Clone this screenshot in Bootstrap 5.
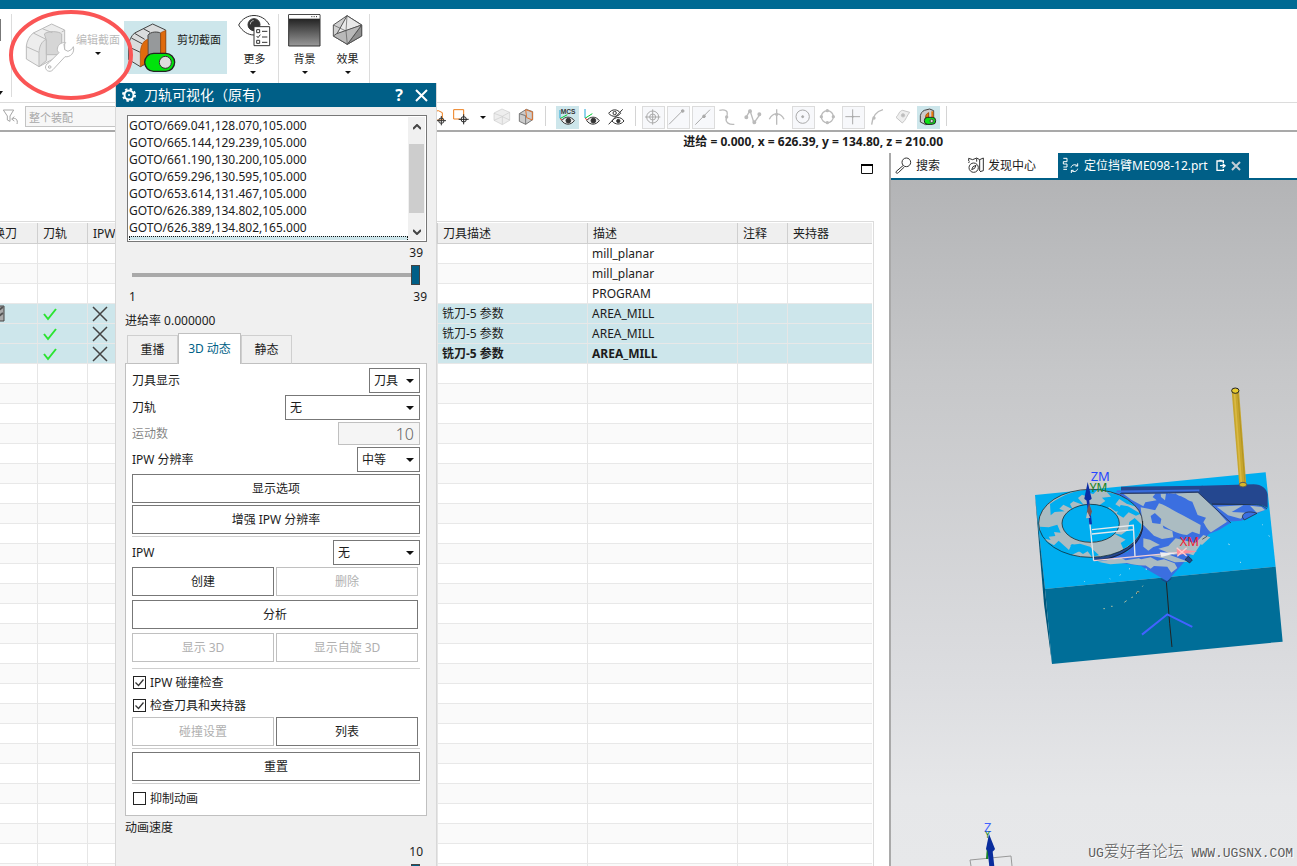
<!DOCTYPE html>
<html lang="zh-CN">
<head>
<meta charset="utf-8">
<meta name="viewport" content="width=device-width, initial-scale=1">
<title>刀轨可视化</title>
<link href="https://cdn.jsdelivr.net/npm/bootstrap@5.3.0/dist/css/bootstrap.min.css" rel="stylesheet">
<style>
:root{--nx:#005f87;--sel:#cde6eb;--edge:#777;--soft:#c0c0c0}
body{font-family:"Noto Sans","Noto Sans CJK SC",sans-serif;font-size:12px;line-height:16px;color:#1c1c1c;background:#fff}
svg{display:block;flex:none}
button{color:inherit}
.topstrip{height:9px;background:#006a93;flex:none}
.ribbon{height:94px;flex:none;font-size:11px;border-bottom:1px solid #dcdcdc}
.rsep{width:1px;background:#dcdcdc;margin-top:5px;height:83px;flex:none}
.rbtn{border:0;background:none;padding:0;flex:none}
.rtext{height:53px;margin-top:12px}
.rtext.active{background:var(--sel);width:103px}
.rtext.dim{color:#bababa}
.rlabel{padding-top:11px}
.rstack{width:43px;margin-top:5px}
.caret{width:0;height:0;border:3px solid transparent;border-top:3px solid #111;border-bottom:0;display:block}
.toolbar-row{height:29px;flex:none;padding:3px 0 0 2px;column-gap:2px;border-bottom:2px solid #a9a9a9}
.filterbox{width:395px;height:21px;font-size:11px;border:1px solid #c4c4c4;background:#f7f7f7;color:#a8a8a8;padding:0 3px;border-radius:0}
.tb{width:23px;height:23px;padding:0;border:0;background:none;flex:none}
.tb.slim{width:13px}
.tb.boxed{background:#f7f8fb;outline:1px solid #dcdcdc;outline-offset:-1px}
.tb.on{background:var(--sel)}
.tsep{width:1px;height:20px;background:#d4d4d4;flex:none}
.feed{height:21px;flex:none;padding-right:354px;line-height:20px}
.leftpane{flex:0 0 889px;max-width:69%;padding-right:15px}
.panehead{height:68px;flex:none;padding:11px 1px 0 0}
.tframe{border-top:1px solid #dcdcdc;border-right:1px solid #dcdcdc;padding:1px 1px 0 0;margin-left:-12px}
.optable{table-layout:fixed;width:100%;border-collapse:separate;border-spacing:0;white-space:nowrap}
.optable th,.optable td{height:20px;padding:0 4px;border-right:1px solid #e6e6e6;border-bottom:1px solid #e8e8e8;line-height:19px;overflow:hidden}
.optable th{font-weight:400;background:#efefef;height:21px;padding:0 5px;border-color:#cfcfcf}
.optable th:last-child,.optable td:last-child{border-right:0}
.optable tbody tr:nth-child(even) td{background:#fafafa}
.optable tbody tr.picked td{background:var(--sel)}
.w50{width:50px}.w85{width:84px}.w150{width:150px}
.viewpane{border-left:2px solid #a9a9a9}
.doctabs{height:27px;border-bottom:2px solid var(--nx);flex:none}
.doctabs a{color:#1c1c1c;text-decoration:none;height:25px}
.doctabs a.current{background:var(--nx);color:#fff;margin-left:22px}
.scene{background:linear-gradient(#b3b4b6,#c6c7c9 28%,#dcdde0 73%,#e6e7e9 90%,#e7e8ea)}
.watermark{right:4px;bottom:3px;font:13px/18px "Liberation Mono","Noto Sans CJK SC",monospace;color:#5c5c5c;text-shadow:1px 1px #fff}
.watermark span{font-family:"Noto Sans CJK SC",sans-serif;font-size:16px;font-weight:300}
.dlg{left:115px;top:83px;bottom:0;width:322px;background:#f0f0f0;border:solid #d8d8d8;border-width:0 1px}
.dlg-title{height:24px;background:var(--nx);color:#fff;font-size:14px;margin:0 -1px;padding:0 9px 0 7px}
.dlg-title button{border:0;background:none;padding:0}
.dlg-body{padding:8px 9px 0}
.gotolist{height:127px;border:1px solid var(--edge);background:#fff;margin:0 0 3px 2px;padding:1px}
.gotolist li{line-height:17px}
.gotolist li.cur{height:4px;border:1px dotted #111;border-bottom:0;background:var(--sel)}
.sbar{width:17px;background:#f0f0f0}
.sbar button{border:0;background:none;padding:0;height:27px}
.sbar button:first-child{padding-bottom:8px}
.sbar button:last-child{padding-top:10px}
.sbar .thumb{background:#cdcdcd;width:15px;height:69px}
.slide{appearance:none;-webkit-appearance:none;background:none;width:288px;height:20px;margin:0 0 0 7px;display:block}
.slide::-webkit-slider-runnable-track{height:4px;background:#a9a9a9}
.slide::-webkit-slider-thumb{-webkit-appearance:none;width:9px;height:20px;margin-top:-8px;background:var(--nx);border:1px solid #444;border-radius:0}
.vtabs{padding-left:2px;height:31px;margin-bottom:-1px;position:relative}
.vtabs button{border:1px solid #cfcfcf;border-bottom-color:var(--soft);background:#f0f0f0;height:29px;padding:0;width:51px}
.vtabs button.active{width:63px;height:31px;background:#fff;border-color:var(--soft);border-bottom:0;color:var(--nx);padding-bottom:1px}
.vpanel{background:#fff;border:1px solid var(--soft);padding:4px 6px 5px;gap:2px}
.pick{appearance:none;height:25px;border:1px solid var(--edge);border-radius:0;padding:0 4px;font-size:12px;color:inherit;background:#fff url("data:image/svg+xml,%3Csvg xmlns='http://www.w3.org/2000/svg' width='8' height='4'%3E%3Cpath d='M0 0h8L4 4z' fill='%23111'/%3E%3C/svg%3E") no-repeat right 5px center}
.p1{width:51px}.p2{width:135px}.p3{width:63px}.p4{width:87px}
.count{width:82px;height:23px;border:1px solid var(--soft);background:#f5f5f5;color:#666;font-size:16px;text-align:right;padding:0 5px;font-weight:300}
.act{height:29px;border:1px solid var(--edge);border-radius:0;background:#fff;padding:0}
.act:disabled{border-color:var(--soft);color:#b0b0b0}
.acts{gap:2px}
.inset-end{margin-right:2px}
.rule{height:1px;background:#cfcfcf;margin-bottom:1px}
.tick{appearance:none;width:13px;height:13px;border:1px solid #222;margin:0 4px 0 1px;background:#fff}
.tick:checked{background:#fff url("data:image/svg+xml,%3Csvg xmlns='http://www.w3.org/2000/svg' width='11' height='11'%3E%3Cpath d='M1.500 5.500l3 3 5-6' fill='none' stroke='%23333' stroke-width='1.300'/%3E%3C/svg%3E")}
.tickrow{height:23px}
.ring{left:8px;top:9px}
</style>
</head>
<body class="vh-100 overflow-hidden d-flex flex-column position-relative">
<div class="topstrip"></div>

<div class="ribbon d-flex">
  <svg width="11" height="93" viewBox="0 9 11 93"><path d="M0 19h1v22H0z" fill="#777"/><path d="M-3 91h6l-3 4z" fill="#111"/></svg>
  <div class="rsep"></div>
  <button class="rbtn rtext dim d-flex ms-2">
    <svg class="ms-1" width="52" height="53" viewBox="21 33 156 159" fill="#ededed" stroke="#bbb" stroke-width="3" stroke-linejoin="round">
      <path d="M28 147V108c2-16 9-30 21-39l55-27 39 18v70l-40 20-37 20z"/>
      <path d="M66 170v-42c1-20 8-34 22-40v64z" fill="#e0e0e0"/>
      <path d="M82 72c10-10 44-9 52 0v62H88V90z" fill="#d6d6d6"/>
      <path d="M28 110l38 17M49 69l38 19M76 56l30 12M134 66l9-5" fill="none"/>
      <path d="M121 119c0-13 10-23 25-21l-5 5 2 16 10 5 11-6 5-8c5 18-9 33-25 30l-36 39c-10 12-28 0-21-13 2-4 5-6 9-8l30-30c-3-3-5-6-5-9z" fill="#fff"/><circle cx="98" cy="171" r="4"/></svg>
    <span class="rlabel d-flex flex-column align-items-center">编辑截面<i class="caret mt-1"></i></span>
  </button>
  <button class="rbtn rtext active d-flex ms-1">
    <svg class="ms-1" width="49" height="53" viewBox="342 33 147 159" fill="#dadcdd" stroke="#444" stroke-width="3" stroke-linejoin="round">
      <path d="M343 148v-40c2-16 8-30 19-39l54-27 39 18v72l-40 20-36 18z"/>
      <path d="M402 76c6-12 32-12 38-6v64h-38z" fill="#96999b"/>
      <path d="M362 70l30 18M388 56l20 11M343 110l36 17M352 84l32 17" fill="none"/>
      <path d="M379 170v-42c1-20 8-36 22-40v44l-10 30zM440 68l15-7v72h-15z" fill="#df6b0d" stroke="#a44c08" stroke-width="2"/>
      <rect x="392" y="130" width="90" height="54" rx="27" fill="#00e30c" stroke="#222" stroke-width="4"/><circle cx="454" cy="157" r="18" fill="#ddd" stroke="#333"/></svg>
    <span class="rlabel">剪切截面</span>
  </button>
  <button class="rbtn rstack d-flex flex-column align-items-center ms-1">
    <svg class="ms-1" width="33" height="33" viewBox="716 41 99 99" fill="none" stroke="#333" stroke-width="3">
      <path d="M718 74c20-38 72-38 92 0M718 74c12 20 28 30 46 30"/><circle cx="764" cy="73" r="18" fill="#333"/><path d="M753 72c0-6 4-11 10-11" stroke="#fff" stroke-width="2"/>
      <path d="M764 79h47v57h-47z" fill="#fff"/><path d="M772 88h9v9h-9zM788 93h16M788 110h16M788 126h16M772 107l4 5 7-9M772 120h9v9h-9z"/></svg>
    <span class="mt-1 ms-1">更多</span><i class="caret mt-1"></i>
  </button>
  <div class="rsep ms-1"></div>
  <button class="rbtn rstack d-flex flex-column align-items-center ms-1">
    <svg width="33" height="33" viewBox="863 41 99 99"><defs><linearGradient id="dusk" x2="0" y2="1"><stop stop-color="#111"/><stop offset="1" stop-color="#999"/></linearGradient></defs><path d="M865 43h94v94h-94z" fill="url(#dusk)" stroke="#333" stroke-width="3"/><path d="M866 44h92v11h-92z" fill="#fff"/><path d="M933 49h3m4 0h3m4 0h3" stroke="#222" stroke-width="3"/></svg>
    <span class="mt-1">背景</span><i class="caret mt-1"></i>
  </button>
  <button class="rbtn rstack d-flex flex-column align-items-center">
    <svg width="33" height="33" viewBox="992 41 99 99" stroke="#555" stroke-width="3" stroke-linejoin="round"><path d="M1040 46l44 28v33l-43 25-42-25V74z" fill="#cfcfcf"/><path d="M1040 46l-31 56 75-28z" fill="#e9e9e9"/><path d="M1084 74l-43 58 43-25z" fill="#909090"/><path d="M1009 100l75-26-43 58-42-25z" fill="#b9b9b9"/><path d="M999 74l38 18 4 40M1040 46l-3 46" fill="none" stroke-width="2"/></svg>
    <span class="mt-1">效果</span><i class="caret mt-1"></i>
  </button>
  <div class="rsep"></div>
</div>

<div class="toolbar-row d-flex">
  <svg width="17" height="23" viewBox="3 318 51 69" fill="none" stroke="#a5a5a5" stroke-width="3"><path d="M7 330h31l-11 18v16l-8-4v-12zM48 372c4-14-6-20-14-15m6-7l-8 7 8 6"/></svg>
  <input class="filterbox ms-1 me-1" value="整个装配" aria-label="选择范围" disabled>
  <button class="tb" aria-label="光标"><svg width="23" height="23" viewBox="-15 18 69 69" fill="none" stroke="#333" stroke-width="3"><path d="M2 36l20-4 12 6v22H2z" stroke="#ed7d1a"/><circle cx="31" cy="62" r="8"/><path d="M31 48v28M17 62h28"/></svg></button>
  <button class="tb" aria-label="矩形选择"><svg width="23" height="23" viewBox="60 18 69 69" fill="none" stroke="#222" stroke-width="3"><path d="M87 57H68V29h30v18" stroke="#ed7d1a"/><circle cx="98" cy="58" r="8"/><path d="M98 43v30M83 58h30"/></svg></button>
  <button class="tb slim d-flex justify-content-center align-items-center" aria-label="选项"><i class="caret"></i></button>
  <button class="tb" aria-label="着色"><svg width="23" height="23" viewBox="180 18 69 69" fill="#eee" stroke="#ccc" stroke-width="2" stroke-linejoin="round"><path d="M189 39l24-12 23 10v24l-22 13-25-13z"/><path d="M189 40l25 9 22-12M214 50v23M189 61l25-11 22 10" fill="none"/></svg></button>
  <button class="tb" aria-label="剖切"><svg width="23" height="23" viewBox="255 18 69 69" fill="#ccc" stroke="#777" stroke-width="3"><path d="M265 41l21-13 19 7v24l-21 14-19-9zM265 41l19 6v26"/><path d="M284 29l20 7v24l-17-7z" fill="none" stroke="#df7430"/></svg></button>
  <div class="tsep ms-1 me-2"></div>
  <button class="tb on" aria-label="MCS"><svg width="23" height="23" viewBox="372 18 69 69" fill="none" stroke="#333" stroke-width="3"><text x="386" y="42" font-size="20" font-weight="700" font-family="Liberation Sans" fill="#333" stroke="none">MCS</text><path d="M384 30v25" stroke="#20a6d8"/><path d="M384 56l22-12" stroke="#0c3"/><path d="M384 56l12 8" stroke="#e33"/><path d="M389 62c10-14 28-14 38 0-10 14-28 14-38 0z" fill="#eee"/><circle cx="409" cy="62" r="7" fill="#333"/></svg></button>
  <button class="tb" aria-label="显示坐标系"><svg width="23" height="23" viewBox="447 18 69 69" fill="none" stroke="#333" stroke-width="3"><path d="M459 27v27" stroke="#20a6d8"/><path d="M459 55l22-14" stroke="#0c3"/><path d="M459 55l12 8" stroke="#e33"/><path d="M464 62c10-14 28-14 38 0-10 14-28 14-38 0z" fill="#eee"/><circle cx="484" cy="62" r="7" fill="#333"/></svg></button>
  <button class="tb" aria-label="隐藏"><svg width="23" height="23" viewBox="522 18 69 69" fill="none" stroke="#333" stroke-width="3"><path d="M530 40c10-14 26-14 36 0-10 12-26 12-36 0zM540 63c10-14 26-14 36 0-10 12-26 12-36 0z"/><circle cx="548" cy="39" r="5"/><circle cx="559" cy="63" r="5" fill="#333"/><path d="M530 73l42-45"/></svg></button>
  <div class="tsep mx-1"></div>
  <button class="tb boxed" aria-label="捕捉"><svg width="23" height="23" viewBox="630 18 69 69" fill="none" stroke="#aaa" stroke-width="3"><circle cx="662" cy="51" r="18"/><circle cx="662" cy="51" r="9"/><path d="M662 28v46M639 51h46"/></svg></button>
  <button class="tb boxed" aria-label="端点"><svg width="23" height="23" viewBox="705 18 69 69" fill="#aaa" stroke="#aaa" stroke-width="3"><path d="M711 73l38-38"/><circle cx="752" cy="33" r="4"/></svg></button>
  <button class="tb boxed" aria-label="中点"><svg width="23" height="23" viewBox="780 18 69 69" fill="#aaa" stroke="#aaa" stroke-width="3"><path d="M790 74l44-45"/><circle cx="816" cy="49" r="4"/></svg></button>
  <button class="tb" aria-label="曲线"><svg width="23" height="23" viewBox="45 18 69 69" fill="none" stroke="#bbb" stroke-width="4"><path d="M52 31c30-6 25 12 21 24s9 20 24 18"/><circle cx="74" cy="51" r="3"/></svg></button>
  <button class="tb" aria-label="极点"><svg width="23" height="23" viewBox="120 18 69 69" fill="#bbb" stroke="#bbb" stroke-width="4"><path d="M132 52l12-20 12 37 18-26" fill="none"/><circle cx="133" cy="52" r="4"/><circle cx="144" cy="34" r="4"/><circle cx="157" cy="67" r="4"/><circle cx="172" cy="43" r="4"/></svg></button>
  <button class="tb" aria-label="交点"><svg width="23" height="23" viewBox="195 18 69 69" fill="none" stroke="#bbb" stroke-width="4"><path d="M224 28v46M202 58c10-22 34-22 44 0"/><circle cx="224" cy="43" r="3"/></svg></button>
  <button class="tb boxed" aria-label="圆心"><svg width="23" height="23" viewBox="270 18 69 69" fill="none" stroke="#aaa" stroke-width="3"><circle cx="302" cy="50" r="20"/><circle cx="302" cy="50" r="3" fill="#aaa"/></svg></button>
  <button class="tb" aria-label="象限点"><svg width="23" height="23" viewBox="345 18 69 69" fill="#bbb" stroke="#bbb" stroke-width="4"><circle cx="376" cy="50" r="18" fill="none"/><circle cx="376" cy="32" r="3"/><circle cx="376" cy="68" r="3"/><circle cx="358" cy="50" r="3"/><circle cx="394" cy="50" r="3"/></svg></button>
  <button class="tb boxed" aria-label="现有点"><svg width="23" height="23" viewBox="420 18 69 69" fill="#aaa" stroke="#aaa" stroke-width="3"><path d="M452 28v45M430 50h44"/><circle cx="452" cy="50" r="2"/></svg></button>
  <button class="tb" aria-label="曲线上的点"><svg width="23" height="23" viewBox="495 18 69 69" fill="none" stroke="#bbb" stroke-width="4"><path d="M509 74c2-22 14-40 34-45"/><circle cx="516" cy="54" r="3" fill="#bbb"/></svg></button>
  <button class="tb" aria-label="面上的点"><svg width="23" height="23" viewBox="570 18 69 69" fill="#eee" stroke="#c6c6c6" stroke-width="3"><path d="M582 52c8-6 9-20 20-21l21 6c-9 10-10 22-22 32z"/><circle cx="603" cy="46" r="5" fill="#bbb"/></svg></button>
  <button class="tb on" aria-label="剪切截面"><svg width="23" height="23" viewBox="642 18 69 69" fill="#ccc" stroke="#444" stroke-width="3"><path d="M652 66V47c2-8 6-13 12-16l16-4 12 5v38l-24 4z"/><path d="M668 70V52c0-8 4-12 9-14v26z" fill="#e9760c" stroke="#a44c08"/><path d="M688 34v24" stroke="#e9760c" stroke-width="6"/><rect x="664" y="52" width="34" height="21" rx="10" fill="#0ce217" stroke="#222"/><circle cx="686" cy="63" r="5" fill="#ddd"/></svg></button>
  <div class="tsep ms-1"></div>
</div>

<div class="feed fw-bold text-end">进给 = 0.000, x = 626.39, y = 134.80, z = 210.00</div>

<main class="d-flex flex-fill overflow-hidden">
  <section class="leftpane d-flex flex-column overflow-hidden">
    <div class="panehead d-flex justify-content-end"><svg width="12" height="10" viewBox="0 0 12 10"><path d="M.5 1h11v8.500H.5z" fill="none" stroke="#111"/><path d="M0 0h12v2H0z"/></svg></div>
    <div class="tframe flex-fill overflow-hidden">
      <table class="optable">
        <colgroup><col class="w50"><col class="w50"><col class="w50"><col><col class="w150"><col class="w150"><col class="w50"><col class="w85"></colgroup>
        <thead><tr><th>换刀</th><th>刀轨</th><th>IPW</th><th></th><th>刀具描述</th><th>描述</th><th>注释</th><th>夹持器</th></tr></thead>
        <tbody id="ops">
          <tr><td></td><td></td><td></td><td></td><td></td><td>mill_planar</td><td></td><td></td></tr>
          <tr><td></td><td></td><td></td><td></td><td></td><td>mill_planar</td><td></td><td></td></tr>
          <tr><td></td><td></td><td></td><td></td><td></td><td>PROGRAM</td><td></td><td></td></tr>
          <tr class="picked"><td><svg width="13" height="17" viewBox="0 0 13 17"><path d="M1 1h11v15H1z" fill="#aaa" stroke="#444"/><path d="M3 8l8-6M3 14l8-6" stroke="#555" stroke-width="2"/></svg></td><td class="ok"></td><td class="no"></td><td></td><td>铣刀-5 参数</td><td>AREA_MILL</td><td></td><td></td></tr>
          <tr class="picked"><td></td><td class="ok"></td><td class="no"></td><td></td><td>铣刀-5 参数</td><td>AREA_MILL</td><td></td><td></td></tr>
          <tr class="picked fw-bold"><td></td><td class="ok"></td><td class="no"></td><td></td><td>铣刀-5 参数</td><td>AREA_MILL</td><td></td><td></td></tr>
        </tbody>
      </table>
    </div>
  </section>

  <section class="viewpane flex-fill d-flex flex-column overflow-hidden">
    <nav class="doctabs d-flex">
      <a href="#" class="d-flex align-items-center gap-1 px-1"><svg width="17" height="17" viewBox="587 170 51 51" fill="none" stroke="#333" stroke-width="3"><circle cx="621" cy="186" r="13"/><path d="M611 196l-20 17c-3 5 2 8 6 4l18-17"/></svg>搜索</a>
      <a href="#" class="d-flex align-items-center gap-1 ps-4"><svg width="16" height="17" viewBox="24 170 48 51" fill="none" stroke="#333" stroke-width="3"><path d="M26 182v-8l12 4 12-5 9 5 11-5v38l-10 3M59 178v34M28 183l-2 5M50 174v10"/><circle cx="41" cy="202" r="14"/><path d="M35 208l4-9 9-4-4 9z"/></svg>发现中心</a>
      <a href="#" class="current d-flex align-items-center px-1 text-nowrap"><svg class="me-1" width="18" height="17" viewBox="310 170 54 51" fill="none" stroke="#fff" stroke-width="3"><path d="M314 174h11v10h-11M314 191h11M314 184v7M325 191v9h-11M314 207h11"/><path d="M337 202c2-10 14-11 20-5v-8M357 197h-7M357 205c-2 10-14 11-19 5v8M338 210h7"/></svg>定位挡臂ME098-12.prt
        <svg class="ms-2" width="11" height="13" viewBox="774 178 33 39" fill="none" stroke="#fff" stroke-width="4"><path d="M796 190v-6h-19v28h19v-4M784 182h7"/><path d="M786 198h14m-6-6l7 6-7 6"/></svg>
        <svg class="ms-1 me-1" width="10" height="10" viewBox="0 0 10 10"><path d="M1 1l8 8M9 1L1 9" stroke="#c3ced6" stroke-width="2"/></svg></a>
    </nav>
    <div class="scene flex-fill position-relative overflow-hidden">
      <svg width="100%" height="100%" viewBox="891 180 406 686" preserveAspectRatio="xMaxYMid meet" font-family="Noto Sans">
        <g transform="translate(1010 370) scale(.3333)">
          <path d="M75 375L767 307l30 283-692 67z" fill="#00aef0"/>
          <path d="M75 375l30 282 21 225-24-180z" fill="#00567a"/>
          <path d="M105 657l692-67 21 225-692 67z" fill="#006e98"/>
          <path d="M333 350l245-3 35 50-60 20-220-46z" fill="#24478f"/>
          <path d="M300 368l264-2 98 92-35 22-30 12-125 142-80-47-140-19 100-22 42-52z" fill="#3b6fe0"/>
          <path d="M320 364l248-3" stroke="#3b6fe0" stroke-width="5"/>
          <g fill="#abbcc2">
            <path d="M452 371l112-3 91 85-52 34c-12-8-16-20-23-30l8-14-25-8-16-40c-12-2-22-14-40-18l-14-8-25 2-3 20-12-10z"/>
            <path d="M340 371h96l-8 10 12 10-34 6-6 12-36-20zM447 400c26 8 44 24 70 35l55 30-3 28-22-8-16 10c-32-2-56-20-80-32l3-16-22-20zM392 412l52 10-22 16 5 21 30 4 4 12 26 8 3 19-34 5-24-10-34-34zM497 505l58 14 14-10 4 12-23 35-20-6-40 4-45-18 30-8z"/>
            <path d="M263 575l70-12 14 8 40-6 34 20c-22 4-50 0-70-6l-50 4zM382 570l40-8 20 10 20-4 32 12 8 14-18 14-12-18-40-2-10 8zM415 556l65-1 55 20-40 2-34-12z"/>
            <path d="M400 505l20 4 30 16-20 6-15 11-15-12zM580 495l21 7-25 23-15-11z"/>
          </g>
          <path d="M575 347l156-4c24 0 40 14 42 31v40c-18-11-27-11-50-10l-116 1-31-35z" fill="#24478f"/>
          <path d="M606 405l118-1c18-1 31 2 47 13l-77 35-43 3z" fill="#3b6fe0"/><path d="M620 410l80-4-35 20 45 2-18 18-38-10zM720 407l35 4 10 9-25 8z" fill="#abbcc2"/>
          <path d="M697 441c2-20 32-16 44-11l-38 20z" fill="#3b6fe0" stroke="#222" stroke-width="2"/>
          <path d="M564 367l99 92M330 371l234-4M605 402l120 2c20-1 34 2 46 13" fill="none" stroke="#222" stroke-width="2"/>
          <path d="M246 562c88 0 148-54 152-104v20c-7 53-70 91-145 95z" fill="#24478f"/>
          <ellipse cx="242" cy="460" rx="156" ry="102" fill="#abbcc2"/>
          <g fill="#00aef0">
            <path d="M120 402c45-34 82-41 116-43l26 1-12 12-15-4 3 14-22-8-12 10 18 22-32-12-10 8 8 16-28-14-12 12 16 8-30 2-12 10zM290 365c38 8 75 26 88 45l-28-9-22-14-12 16 24 14-22 8-20-14-12 8-20-12 20-14-10-10 27-3zM332 405l22 4 38 22-14 6-22-10-16 16-20-12zM90 470l26 2 26-8 10 24-20-2 4 12-20 2 6 10-30-6zM102 510l30 16 14-14 31 28 8-18 20 4 24 15-24 4-20 10c-30-3-64-20-83-45zM180 525l30-4 30 9 27 26-22 4-12-16-14 8zM310 490l24 4 20-14 4-24 16-12 20 19c0 32-20 56-54 74l-8-18 15-10z"/>
            <ellipse cx="242" cy="460" rx="86" ry="57" stroke="#111" stroke-width="2"/>
          </g>
          <ellipse cx="242" cy="460" rx="156" ry="102" fill="none" stroke="#111" stroke-width="2"/>
          <path d="M398 453v20c-7 55-70 93-140 98" fill="none" stroke="#111" stroke-width="2"/>
          <path d="M577 508l14-9m-66 70l10-10 12 11-8 9z" stroke="#222" stroke-width="2" fill="#24478f"/>
          <path d="M469 635l10 125 7 71" fill="none" stroke="#222" stroke-width="3"/>
          <path d="M396 794l76-61 75 38" fill="none" stroke="#4262ff" stroke-width="6"/>
          <path d="M454 628l16 8 14-10" fill="none" stroke="#223a88" stroke-width="3"/>
          <path d="M222 633l2 2M299 626l2 1M329 616l3-2M357 597l3-1M407 597l4 1M655 522l4 2M690 576l3 2M757 464l2 1M776 497l3 2" stroke="#bfe7ef" stroke-width="3"/>
          <path d="M280 716h5M303 709h5M343 697l7-5M364 683l5-2M379 672l3-7 6 1M397 650l2-3" stroke="#a8bda2" stroke-width="3"/>
          <g fill="none" stroke="#e6e9ec" stroke-width="4"><path d="M236 424l15 148M246 479l124-13 5 94M246 492l126-13"/><path d="M251 572l250-24" stroke="#f3cfd5"/></g>
          <path d="M450 547l50 2-46 12z" fill="#eee"/><path d="M500 538l62 6-60 12z" fill="#ff8d98"/><path d="M500 533l30 25M530 533l-28 26" stroke="#fcc" stroke-width="4"/>
          <path d="M233 385l9 78" stroke="#0c2ea8" stroke-width="8"/><path d="M233 336l12 50c-6 7-17 7-22 0z" fill="#0a2da5"/><path d="M237 400l9 24-4 14-12-9z" fill="#765656"/><path d="M228 445l4-20 9 18z" fill="#bbb"/>
          <text x="242" y="333" font-size="39" fill="#2647ff">ZM</text><text x="239" y="367" font-size="36" fill="#168324">YM</text><text x="509" y="529" font-size="39" fill="#ef1c32">XM</text>
          <path d="M665 62l22-1 22 284-21 1z" fill="#c7a62d"/><path d="M673 64l21 278" stroke="#d9b943" stroke-width="5"/><path d="M683 62l22 280" stroke="#b39422" stroke-width="3"/>
          <ellipse cx="676" cy="62" rx="11" ry="8" fill="#e9cc2e" stroke="#222" stroke-width="3"/><ellipse cx="699" cy="344" rx="11" ry="7" fill="#d8b72a" stroke="#555" stroke-width="3"/>
        </g>
        <path d="M971 866l-1-6 41-4 1 10" fill="none" stroke="#999"/>
        <path d="M988 846l-1 13" stroke="#168324" stroke-width="2"/><path d="M990 850l2 18" stroke="#0a2d9d" stroke-width="5"/><path d="M989 834l6 15c-2 4-7 4-9 0z" fill="#0a2d9d"/>
        <text x="984" y="832" font-size="13" fill="#4262ff">Z</text><text x="985" y="838" font-size="9" fill="#168324">Y</text>
      </svg>
      <div class="watermark position-absolute text-nowrap">UG<span>爱好者论坛</span> WWW.UGSNX.COM</div>
    </div>
  </section>
</main>

<div class="dlg position-absolute overflow-hidden" role="dialog" aria-label="刀轨可视化">
  <div class="dlg-title d-flex align-items-center">
    <svg width="14" height="14" viewBox="-7 -7 14 14"><circle r="4.500" fill="none" stroke="#fff" stroke-width="2"/><circle r="6" fill="none" stroke="#fff" stroke-width="2" stroke-dasharray="2.400 2.312"/><circle r="1" fill="#fff"/></svg>
    <span class="ms-2 flex-fill">刀轨可视化（原有）</span>
    <button class="fw-bold fs-6 me-2 pe-1" aria-label="帮助">?</button>
    <button aria-label="关闭"><svg width="13" height="13" viewBox="0 0 13 13"><path d="M1 1l11 11M12 1L1 12" stroke="#fff" stroke-width="2"/></svg></button>
  </div>
  <div class="dlg-body">
    <div class="gotolist d-flex">
      <ul class="list-unstyled mb-0 flex-fill overflow-hidden">
        <li>GOTO/669.041,128.070,105.000</li><li>GOTO/665.144,129.239,105.000</li><li>GOTO/661.190,130.200,105.000</li><li>GOTO/659.296,130.595,105.000</li><li>GOTO/653.614,131.467,105.000</li><li>GOTO/626.389,134.802,105.000</li><li>GOTO/626.389,134.802,165.000</li><li class="cur"></li>
      </ul>
      <div class="sbar d-flex flex-column align-items-center">
        <button aria-label="向上"><svg width="8" height="6" viewBox="0 0 8 6"><path d="M0 5l4-4 4 4" fill="none" stroke="#444" stroke-width="2"/></svg></button>
        <div class="thumb"></div>
        <button aria-label="向下"><svg width="8" height="6" viewBox="0 0 8 6"><path d="M0 1l4 4 4-4" fill="none" stroke="#444" stroke-width="2"/></svg></button>
      </div>
    </div>
    <div class="text-end pe-1 mb-1">39</div>
    <input type="range" class="slide" min="1" max="39" value="39" aria-label="运动">
    <div class="d-flex justify-content-between mt-1 mb-2 ps-1"><span>1</span><span>39</span></div>
    <div class="mb-1">进给率 0.000000</div>
    <div class="vtabs d-flex align-items-end" role="tablist"><button role="tab">重播</button><button role="tab" class="active">3D 动态</button><button role="tab">静态</button></div>
    <div class="vpanel d-flex flex-column">
      <div class="d-flex justify-content-between align-items-center"><label for="s1">刀具显示</label><select id="s1" class="pick p1"><option>刀具</option></select></div>
      <div class="d-flex justify-content-between align-items-center"><label for="s2">刀轨</label><select id="s2" class="pick p2"><option>无</option></select></div>
      <div class="d-flex justify-content-between align-items-center"><label for="n1" class="text-black-50">运动数</label><input id="n1" class="count" value="10" disabled></div>
      <div class="d-flex justify-content-between align-items-center"><label for="s3">IPW 分辨率</label><select id="s3" class="pick p3"><option>中等</option></select></div>
      <button class="act">显示选项</button>
      <button class="act">增强 IPW 分辨率</button>
      <div class="rule"></div>
      <div class="d-flex justify-content-between align-items-center"><label for="s4">IPW</label><select id="s4" class="pick p4"><option>无</option></select></div>
      <div class="d-flex flex-column gap-1 inset-end">
        <div class="acts d-flex"><button class="act w-50">创建</button><button class="act w-50" disabled>删除</button></div>
        <button class="act">分析</button>
        <div class="acts d-flex"><button class="act w-50" disabled>显示 3D</button><button class="act w-50" disabled>显示自旋 3D</button></div>
      </div>
      <div class="rule mt-1 mb-0"></div>
      <div>
        <label class="tickrow d-flex align-items-center"><input type="checkbox" class="tick" checked>IPW 碰撞检查</label>
        <label class="tickrow d-flex align-items-center"><input type="checkbox" class="tick" checked>检查刀具和夹持器</label>
        <div class="acts inset-end d-flex"><button class="act w-50" disabled>碰撞设置</button><button class="act w-50">列表</button></div>
      </div>
      <div class="rule"></div>
      <button class="act">重置</button>
      <div class="rule"></div>
      <label class="tickrow d-flex align-items-center"><input type="checkbox" class="tick">抑制动画</label>
    </div>
    <div class="mt-1">动画速度</div>
    <div class="text-end pe-1 mt-2 mb-1">10</div>
    <input type="range" class="slide" min="1" max="10" value="10" aria-label="动画速度">
  </div>
</div>

<svg class="ring position-absolute pe-none" width="126" height="93" viewBox="0 0 126 93"><ellipse cx="63" cy="46" rx="60" ry="43" fill="none" stroke="#fa5555" stroke-width="4"/></svg>

<script src="https://cdn.jsdelivr.net/npm/bootstrap@5.3.0/dist/js/bootstrap.bundle.min.js"></script>
<script>
document.querySelectorAll('.ok').forEach(c=>c.innerHTML='<svg width="16" height="16" viewBox="0 0 16 16"><path d="M2 8l4 5 8-10" fill="none" stroke="#2be432" stroke-width="2"/></svg>');
document.querySelectorAll('.no').forEach(c=>c.innerHTML='<svg width="16" height="16" viewBox="0 0 16 16"><path d="M1 1l14 14M15 1L1 15" stroke="#444" stroke-width="1.500"/></svg>');
const ops=document.getElementById('ops');
for(let i=0;i<60;i++){const r=ops.insertRow();for(let j=0;j<8;j++)r.insertCell();}
</script>
</body>
</html>
